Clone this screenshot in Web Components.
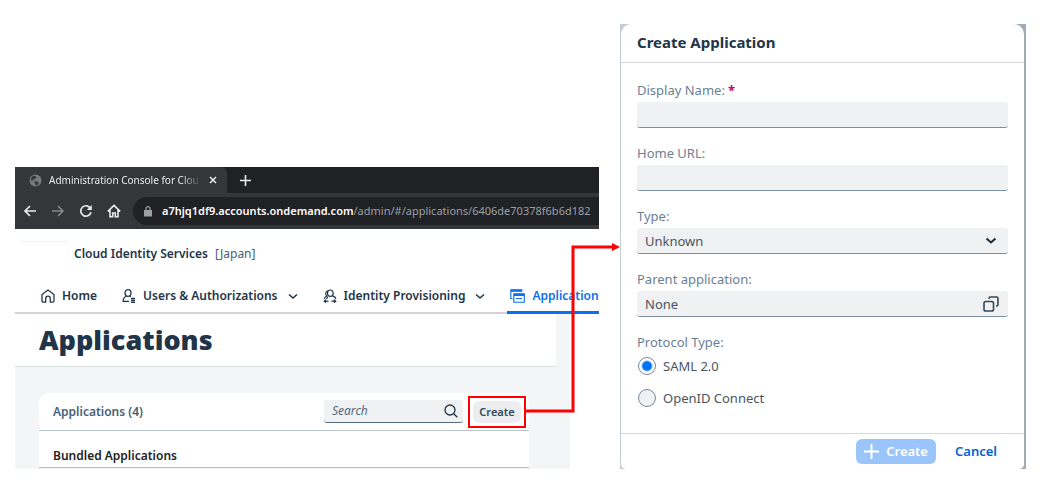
<!DOCTYPE html>
<html lang="en">
<head>
<meta charset="utf-8">
<title>Create Application</title>
<style>
  body { margin: 0; background: #fff; font-family: "Noto Sans", "Open Sans", sans-serif; color: #223548; }
</style>
</head>
<body>
<guide-scene>
  <browser-window slot="window">
    <console-header></console-header>
    <application-list></application-list>
  </browser-window>
  <create-dialog slot="dialog">
    <form-field label="Display Name:" required></form-field>
    <form-field label="Home URL:"></form-field>
    <form-field label="Type:" kind="select" value="Unknown"></form-field>
    <form-field label="Parent application:" kind="lookup" value="None"></form-field>
    <protocol-choice></protocol-choice>
  </create-dialog>
</guide-scene>

<script>
function define(name, html, setup) {
  const template = document.createElement('template');
  template.innerHTML = html;
  customElements.define(name, class extends HTMLElement {
    constructor() {
      super();
      this.attachShadow({ mode: 'open' }).append(template.content.cloneNode(true));
    }
    connectedCallback() { if (setup) setup(this, this.shadowRoot); }
  });
}

define('guide-scene', `
<style>
  :host { display: grid; grid-template-columns: minmax(0, 584fr) minmax(0, 406fr); gap: 21px; align-items: end; padding: 24px 14px 18px 15px; }
</style>
<slot name="window"></slot><slot name="dialog"></slot>`);

define('browser-window', `
<style>
  :host { display: block; position: relative; min-width: 0; }
  .frame { overflow: hidden; background: #fff; }
  .tabs { display: flex; height: 26px; background: #202124; color: #e8eaed; font: 10px/26px "Noto Sans", sans-serif; }
  .tab { display: flex; align-items: center; gap: 7px; width: 212px; box-sizing: border-box; padding: 0 10px 0 14px; background: #35363a; border-radius: 0 6px 0 0; }
  .name { flex: 1; white-space: nowrap; -webkit-mask-image: linear-gradient(90deg, #000 86%, transparent); mask-image: linear-gradient(90deg, #000 86%, transparent); }
  button { display: flex; padding: 0; border: 0; background: none; color: inherit; }
  .new { align-items: center; margin-left: 13px; }
  .bar { display: flex; align-items: center; gap: 14px; height: 36px; padding-left: 8px; background: #35363a; color: #e8eaed; }
  .bar svg, .tabs svg { display: block; flex: none; }
  .address { flex: 1; min-width: 0; display: flex; align-items: center; gap: 10px; height: 28px; margin-right: -20px; margin-left: -2px; padding-left: 11px; background: #202124; border-radius: 14px; }
  .url { font: 11px/28px "Noto Sans", sans-serif; color: #9aa0a6; white-space: nowrap; }
  .url b { font-weight: 600; color: #fff; }
  .link { position: absolute; right: -21px; bottom: 55px; width: 94px; height: 172px; pointer-events: none; }
</style>
<div class="frame">
  <div class="tabs">
    <div class="tab">
      <svg width="13" height="13" viewBox="0 0 13 13"><circle cx="6.500" cy="6.500" r="6" fill="#777a7e"/><path d="M3 2.500l3-.8 1.500 1.600-1.200 1.500-1.800.3-.5 1.700-2.400-.9zM6 7.200l2.600.3 1.200 1.700-1.500 2.300H6.800L6.300 9.500 5 8.600z" fill="#35363a"/></svg>
      <span class="name">Administration Console for Clou</span>
      <button aria-label="Close tab"><svg width="8" height="8" viewBox="0 0 8 8"><path d="M1 1l6 6M7 1L1 7" stroke="currentColor" stroke-width="1.500"/></svg></button>
    </div>
    <button class="new" aria-label="New tab"><svg width="11" height="11" viewBox="0 0 11 11"><path d="M5.500 0v11M0 5.500h11" stroke="currentColor" stroke-width="1.600"/></svg></button>
  </div>
  <div class="bar">
    <button aria-label="Back"><svg width="14" height="14" viewBox="0 0 14 14" fill="none" stroke="currentColor" stroke-width="1.700"><path d="M13 7H2M7 2L2 7l5 5"/></svg></button>
    <button aria-label="Forward"><svg width="14" height="14" viewBox="0 0 14 14" fill="none" stroke="#85888c" stroke-width="1.500"><path d="M1 7h11M7 2l5 5-5 5"/></svg></button>
    <button aria-label="Reload"><svg width="14" height="14" viewBox="0 0 14 14" fill="none"><path d="M11.500 4.400A5.200 5.200 0 1 0 12 8.300" stroke="currentColor" stroke-width="1.700"/><path d="M12.800 1v5h-5z" fill="currentColor"/></svg></button>
    <button aria-label="Home page"><svg width="14" height="14" viewBox="0 0 14 14" fill="none" stroke="currentColor" stroke-width="1.600"><path d="M.8 7.300L7 1.400l6.200 5.900M3 6v6.800h2.700V9h2.600v3.800H11V6"/></svg></button>
    <div class="address">
      <svg width="8" height="11" viewBox="0 0 8 11"><path d="M0 4h8v6.500H0z" fill="#9aa0a6"/><path d="M2 4.500V2.700a2 2 0 0 1 4 0v1.800" fill="none" stroke="#9aa0a6" stroke-width="1.200"/></svg>
      <span class="url"><b>a7hjq1df9.accounts.ondemand.com</b>/admin/#/applications/6406de70378f6b6d182</span>
    </div>
  </div>
  <slot></slot>
</div>
<svg class="link" viewBox="0 0 94 172"><path d="M0 169H47V5H87" fill="none" stroke="#f00" stroke-width="3"/><path d="M86 1l8 4-8 4z" fill="#f00"/></svg>`);

define('console-header', `
<style>
  :host { display: block; background: #fff; font-family: "Noto Sans", sans-serif; }
  .brand { display: flex; align-items: center; gap: 7px; height: 49px; color: #223548; font-size: 12px; line-height: 16px; white-space: nowrap; }
  .logo { width: 44px; height: 24px; margin: 0 1px 0 7px; border-top: 1px solid #e3f2fa; }
  .brand b { font-weight: 600; }
  .region { color: #475e75; }
  nav { display: flex; height: 34px; border-bottom: 2px solid #d5d5d7; padding-left: 26px; font-size: 12px; line-height: 16px; font-weight: 600; gap: 25px; }
  a { flex: none; display: flex; align-items: center; gap: 7px; height: 36px; color: inherit; text-decoration: none; white-space: nowrap; }
  svg { display: block; flex: none; }
  .down { margin-left: 3px; }
  .on { box-sizing: border-box; color: #0a6ff0; border-bottom: 3px solid #0a6ff0; padding: 3px 9px 0 3px; margin-left: -3px; }
</style>
<div class="brand"><span class="logo"></span><b>Cloud Identity Services</b><span class="region">[Japan]</span></div>
<nav>
  <a href="#home"><svg width="14" height="14" viewBox="0 0 14 14" fill="none" stroke="currentColor" stroke-width="1.300"><path d="M1 5.500L7 1l6 4.500v6.300c0 .8-.5 1.300-1.300 1.300H9.300V9.500a2.300 2.300 0 0 0-4.600 0v3.600H2.300C1.500 13.100 1 12.600 1 11.800z"/></svg><span>Home</span></a>
  <a href="#users"><svg width="14" height="14" viewBox="0 0 14 14" fill="none" stroke="currentColor" stroke-width="1.300"><ellipse cx="6" cy="4" rx="3" ry="3.300"/><path d="M4.500 7C2.300 7.800 1.200 9.700 1.200 12.300H7M7.500 7l1.300.7M9 9.500h4M9 11.500h4M9 13.400h4"/></svg><span>Users &amp; Authorizations</span><svg class="down" width="10" height="7" viewBox="0 0 10 7" fill="none" stroke="currentColor" stroke-width="1.600"><path d="M1 1.500l4 3.500 4-3.500"/></svg></a>
  <a href="#provisioning"><svg width="14" height="14" viewBox="0 0 14 14" fill="none" stroke="currentColor" stroke-width="1.200"><path d="M4.500 4.500c0-2 1-3.500 2.700-3.500 2 0 3 1.400 3 3.200C10.200 6 9 7.300 7.300 7.300S4.500 6 4.500 4.500zM5.500 1.900C3.500 2 2.600 3.300 2.800 5c.1 1 .5 1.600 1 2C2.200 7.500 1.500 8.500 1.300 10M9.500 6.800c2.300.4 3 1.600 3.200 3.200M5 8c-.9.500-1.300 1.100-1.500 2M1 12.200h4.500M3 10.600l-1.800 1.600L3 13.600M8.500 12.200H13M11 10.600l1.800 1.600-1.800 1.400"/></svg><span>Identity Provisioning</span><svg class="down" width="10" height="7" viewBox="0 0 10 7" fill="none" stroke="currentColor" stroke-width="1.600"><path d="M1 1.500l4 3.500 4-3.500"/></svg></a>
  <a class="on" href="#applications"><svg width="15" height="14" viewBox="0 0 15 14" fill="none" stroke="currentColor" stroke-width="1.100"><path d="M2.500 9.500H.8V.8h11v2M.8 2.300h11M3.800 4.800h10.500v8.500H3.800zM3.800 6.500h10.500M6 9.500h6"/><path d="M.8 1.500h11M3.800 5.600h10.500" stroke-width="1.600"/></svg><span>Applications</span></a>
</nav>`);

define('application-list', `
<style>
  :host { display: block; margin-right: 29px; background: #f4f5f7; color: #223548; font-family: "Noto Sans", sans-serif; }
  h1 { box-sizing: border-box; height: 53px; margin: 0 14px 0 0; padding: 10px 24px; background: #fff; border-bottom: 1px solid #d9dede; font: 800 27px/32px "Open Sans", sans-serif; }
  .card { margin: 26px 41px 0 24px; background: #fff; border-radius: 10px 10px 0 0; }
  .head { display: flex; align-items: center; box-sizing: border-box; height: 38px; padding: 0 3px 0 14px; border-bottom: 1px solid #b9c5cd; }
  h2 { flex: 1; margin: 0; font-size: 12px; line-height: 16px; font-weight: 600; color: #475e75; }
  .search { display: flex; align-items: center; width: 139px; box-sizing: border-box; height: 23px; padding: 0 5px 0 8px; background: #eff1f2; border-radius: 3px; border-bottom: 1px solid #556b81; }
  input { flex: 1; min-width: 0; padding: 0; border: 0; outline: 0; background: none; font: italic 12px/16px "Noto Sans", sans-serif; color: #556b82; }
  input::placeholder { color: #556b82; opacity: 1; }
  svg { display: block; }
  .mark { margin-left: 5px; padding: 3px; border: 2px solid #f00; }
  .mark button { display: block; width: 48px; height: 22px; padding: 0; border: 0; border-radius: 6px; background: #ebedef; color: #33485c; font: 600 11px/22px "Noto Sans", sans-serif; }
  h3 { box-sizing: border-box; height: 37px; margin: 0; padding: 17px 14px 3px; border-bottom: 1px solid #a9c0ca; font-size: 12px; line-height: 16px; font-weight: 600; color: #222; }
  .rest { height: 1px; background: #f4f5f7; }
</style>
<h1>Applications</h1>
<div class="card">
  <div class="head">
    <h2>Applications (4)</h2>
    <div class="search"><input type="search" aria-label="Search" placeholder="Search"><svg width="14" height="14" viewBox="0 0 14 14" fill="none" stroke="#223548" stroke-width="1.300"><circle cx="6" cy="6" r="5"/><path d="M9.700 9.700l3.600 3.600"/></svg></div>
    <div class="mark"><button>Create</button></div>
  </div>
  <h3>Bundled Applications</h3>
  <div class="rest"></div>
</div>`);

define('create-dialog', `
<style>
  :host { display: block; min-width: 0; padding: 0 2px 0 1px; background: linear-gradient(90deg, #c5ccd3, #a1abb6); }
  .sheet { background: #fff; border-radius: 10px 10px 5px 5px; }
  h2 { margin: 0; padding: 8px 16px 10px; font-size: 15px; line-height: 20px; font-weight: 700; border-bottom: 1px solid #d9d9d9; color: #223548; }
  .body { display: grid; gap: 15px; padding: 17px 16px 19px; }
  footer { display: flex; justify-content: flex-end; align-items: center; gap: 11px; height: 35px; padding: 0 19px 0 0; border-top: 1px solid #d9d9d9; }
  button { display: flex; align-items: center; justify-content: center; gap: 7px; height: 25px; padding: 0 8px; border: 0; border-radius: 6px; background: none; color: #0064d9; font: 600 13px/25px "Noto Sans", sans-serif; }
  .go { background: #99c5fa; color: #fff; }
</style>
<section class="sheet" role="dialog" aria-label="Create Application">
  <h2>Create Application</h2>
  <div class="body"><slot></slot></div>
  <footer>
    <button class="go" disabled><svg width="15" height="15" viewBox="0 0 15 15"><path d="M7.500 0v15M0 7.500h15" stroke="#fff" stroke-width="2"/></svg><span>Create</span></button>
    <button>Cancel</button>
  </footer>
</section>`);

define('form-field', `
<style>
  :host { display: grid; gap: 2px; font-size: 13px; line-height: 20px; }
  label { color: #6b7f94; white-space: nowrap; }
  .star { margin-left: 3px; color: #ba066c; font-weight: 700; }
  .box { display: grid; grid-template-columns: minmax(0, 1fr) 34px; align-items: center; box-sizing: border-box; height: 26px; background: #eff1f2; border-radius: 3px; border-bottom: 1px solid #7b8ea1; }
  input, select { grid-area: 1 / 1 / 2 / 3; box-sizing: border-box; width: 100%; height: 25px; padding: 0 8px; border: 0; outline: 0; background: none; appearance: none; font: 13px/20px "Noto Sans", sans-serif; color: #4a545e; }
  svg { grid-area: 1 / 2; justify-self: center; pointer-events: none; }
</style>
<label for="control"></label>
<div class="box"></div>`, (host, root) => {
  const label = root.querySelector('label');
  const box = root.querySelector('.box');
  const kind = host.getAttribute('kind');
  const value = host.getAttribute('value') || '';
  label.textContent = host.getAttribute('label');
  if (host.hasAttribute('required')) {
    const star = document.createElement('span');
    star.className = 'star';
    star.textContent = '*';
    label.append(star);
  }
  if (kind === 'select') {
    box.innerHTML = `<select id="control"><option>${value}</option></select>
      <svg width="12" height="8" viewBox="0 0 12 8" fill="none" stroke="#1d2d3e" stroke-width="2"><path d="M1.500 1.500L6 5.500l4.500-4"/></svg>`;
  } else {
    box.innerHTML = `<input id="control" type="text" value="${value}">` + (kind === 'lookup'
      ? '<svg width="16" height="16" viewBox="0 0 16 16" fill="none" stroke="#33485c" stroke-width="1.600"><rect x="1" y="5.500" width="9.500" height="9.500" rx="1.800"/><path d="M6 3V2.500C6 1.500 6.500 1 7.500 1h6C14.500 1 15 1.500 15 2.500v6c0 1-.5 1.500-1.500 1.500H13"/></svg>' : '');
  }
});

define('protocol-choice', `
<style>
  :host { display: block; font-size: 13px; line-height: 20px; }
  fieldset { margin: 0; padding: 0; border: 0; min-width: 0; }
  legend { padding: 0; color: #6b7f94; }
  .options { display: grid; margin-top: -2px; }
  label { display: flex; align-items: center; gap: 7px; height: 32px; color: #4a545e; }
  input { appearance: none; flex: none; box-sizing: border-box; width: 18px; height: 18px; margin: 0 0 0 1px; border: 1px solid #75899d; border-radius: 50%; background: #eff1f2; }
  input:checked { background: radial-gradient(circle, #0070f2 0 4px, #fff 6px); }
</style>
<fieldset>
  <legend>Protocol Type:</legend>
  <div class="options">
    <label><input type="radio" name="protocol" checked><span>SAML 2.0</span></label>
    <label><input type="radio" name="protocol"><span>OpenID Connect</span></label>
  </div>
</fieldset>`);
</script>
</body>
</html>
